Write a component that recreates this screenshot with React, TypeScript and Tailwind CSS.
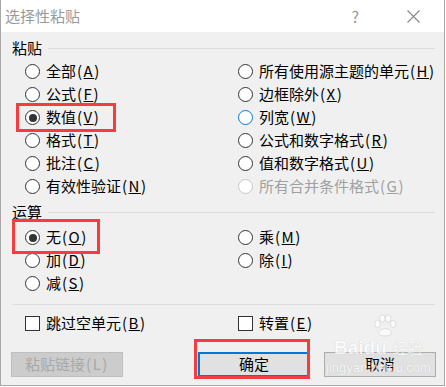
import type { ReactNode } from 'react';

const FONT = { fontFamily: '"Noto Sans CJK SC", "Liberation Sans", sans-serif' };

type OptionProps = {
  label: string;
  hotkey: string;
  checked?: boolean;
  disabled?: boolean;
  focused?: boolean;
};

// "(A)" part, a bit wider like the bitmap font in the dialog
function Hotkey({ k }: { k: string }) {
  return (
    <span className="ml-[1px] tracking-[1.5px]">
      (<u>{k}</u>)
    </span>
  );
}

function Radio({ label, hotkey, checked, disabled, focused }: OptionProps) {
  return (
    <div className="flex h-[23px] items-center gap-[6px]">
      <span
        className={
          'flex h-[15px] w-[15px] shrink-0 items-center justify-center rounded-full border bg-white ' +
          (disabled ? 'border-[#c6c6c6]' : focused ? 'border-[#0078d7]' : 'border-[#333333]')
        }
      >
        {checked && <span className="h-[8px] w-[8px] rounded-full bg-[#333333]" />}
      </span>
      <span className={'whitespace-nowrap text-[15px] ' + (disabled ? 'text-[#a0a0a0]' : 'text-black')}>
        {label}
        <Hotkey k={hotkey} />
      </span>
    </div>
  );
}

function Checkbox({ label, hotkey }: OptionProps) {
  return (
    <div className="flex h-[23px] items-center gap-[6px]">
      <span className="h-[15px] w-[15px] shrink-0 border border-[#333333] bg-white" />
      <span className="whitespace-nowrap text-[15px] text-black">
        {label}
        <Hotkey k={hotkey} />
      </span>
    </div>
  );
}

function GroupHeader({ children }: { children: ReactNode }) {
  return (
    <div className="flex h-[20px] items-center gap-[6px]">
      <span className="text-[15px] text-black">{children}</span>
      <span className="h-px flex-1 bg-[#dcdcdc]" />
    </div>
  );
}

function Button({ children, variant }: { children: ReactNode; variant: 'disabled' | 'default' | 'normal' }) {
  const styles = {
    disabled: 'border border-[#bfbfbf] bg-[#cccccc] text-[#a8a8a8]',
    default: 'border-2 border-[#0078d7] bg-[#e1e1e1] text-black',
    normal: 'border border-[#adadad] bg-[#e1e1e1] text-black',
  };
  return (
    <div className={'flex h-[25px] w-[112px] items-center justify-center text-[15px] ' + styles[variant]}>
      {children}
    </div>
  );
}

export default function App() {
  return (
    <div className="relative h-[387px] w-[446px] bg-white" style={FONT}>
      <div className="flex h-[386px] w-[445px] flex-col border-x border-b border-[#a8a8a8] bg-[#f0f0f0]">
        {/* title bar */}
        <div className="flex h-[32px] shrink-0 items-center bg-white pl-[4px]">
          <span className="flex-1 text-[15px] text-[#999999]">选择性粘贴</span>
          <span className="mr-[48px] text-[16px] text-[#999999]">?</span>
          <svg width="13" height="13" viewBox="0 0 13 13" className="mr-[24px]">
            <path d="M0.5 0.5 L12.5 12.5 M12.5 0.5 L0.5 12.5" stroke="#888" strokeWidth="1.1" />
          </svg>
        </div>

        <div className="flex flex-col pl-[11px] pr-[9px] pt-[6px]">
          <GroupHeader>粘贴</GroupHeader>
          <div className="mt-[2px] grid grid-cols-[213px_1fr] pl-[13px]">
            <div className="flex flex-col">
              <Radio label="全部" hotkey="A" />
              <Radio label="公式" hotkey="F" />
              <Radio label="数值" hotkey="V" checked />
              <Radio label="格式" hotkey="T" />
              <Radio label="批注" hotkey="C" />
              <Radio label="有效性验证" hotkey="N" />
            </div>
            <div className="flex flex-col">
              <Radio label="所有使用源主题的单元" hotkey="H" />
              <Radio label="边框除外" hotkey="X" />
              <Radio label="列宽" hotkey="W" focused />
              <Radio label="公式和数字格式" hotkey="R" />
              <Radio label="值和数字格式" hotkey="U" />
              <Radio label="所有合并条件格式" hotkey="G" disabled />
            </div>
          </div>

          <div className="mt-[4px]">
            <GroupHeader>运算</GroupHeader>
          </div>
          <div className="mt-[4px] grid grid-cols-[213px_1fr] pl-[13px]">
            <div className="flex flex-col">
              <Radio label="无" hotkey="O" checked />
              <Radio label="加" hotkey="D" />
              <Radio label="减" hotkey="S" />
            </div>
            <div className="flex flex-col">
              <Radio label="乘" hotkey="M" />
              <Radio label="除" hotkey="I" />
            </div>
          </div>

          <div className="mt-[9px] h-px bg-[#dcdcdc]" />

          <div className="mt-[7px] grid grid-cols-[213px_1fr] pl-[13px]">
            <Checkbox label="跳过空单元" hotkey="B" />
            <Checkbox label="转置" hotkey="E" />
          </div>

          <div className="mt-[17px] flex items-center">
            <div className="-ml-px">
              <Button variant="disabled">
                粘贴链接<span className="ml-[1px] tracking-[1.5px]">(L)</span>
              </Button>
            </div>
            <div className="ml-[75px] w-[111px]">
              <Button variant="default">确定</Button>
            </div>
            <div className="ml-[15px]">
              <Button variant="normal">取消</Button>
            </div>
          </div>
        </div>
      </div>

      {/* watermark */}
      <div className="pointer-events-none absolute left-[326px] top-[314px] flex flex-col items-center text-white opacity-70 [text-shadow:0_0_1px_#b0b0b0]">
        <svg width="28" height="24" viewBox="0 0 26 22" className="ml-[14px]">
          <g fill="#ffffff" stroke="#cfcfcf" strokeWidth="0.8">
            <ellipse cx="6" cy="9" rx="2.6" ry="3.4" />
            <ellipse cx="10.5" cy="4" rx="2.6" ry="3.4" />
            <ellipse cx="16" cy="4" rx="2.6" ry="3.4" />
            <ellipse cx="20.5" cy="9" rx="2.6" ry="3.4" />
            <path d="M7 18 C7 12 19 12 19 18 C19 21 7 21 7 18 Z" />
          </g>
        </svg>
        <div className="flex items-baseline gap-[6px] leading-none">
          <span className="text-[19px] font-bold" style={{ fontFamily: '"Liberation Sans", sans-serif' }}>
            Baidu
          </span>
          <span className="text-[15px]">经验</span>
        </div>
        <span className="mt-[4px] text-[13px] leading-none" style={{ fontFamily: '"Liberation Sans", sans-serif' }}>
          jingyan.baidu.com
        </span>
      </div>

      {/* red annotation boxes */}
      <div className="absolute left-[16px] top-[103px] h-[29px] w-[100px] border-[3px] border-[#f63c3c]" />
      <div className="absolute left-[12px] top-[219px] h-[35px] w-[88px] border-[3px] border-[#f63c3c]" />
      <div className="absolute left-[194px] top-[339px] h-[40px] w-[116px] border-[3px] border-[#f63c3c]" />
    </div>
  );
}
